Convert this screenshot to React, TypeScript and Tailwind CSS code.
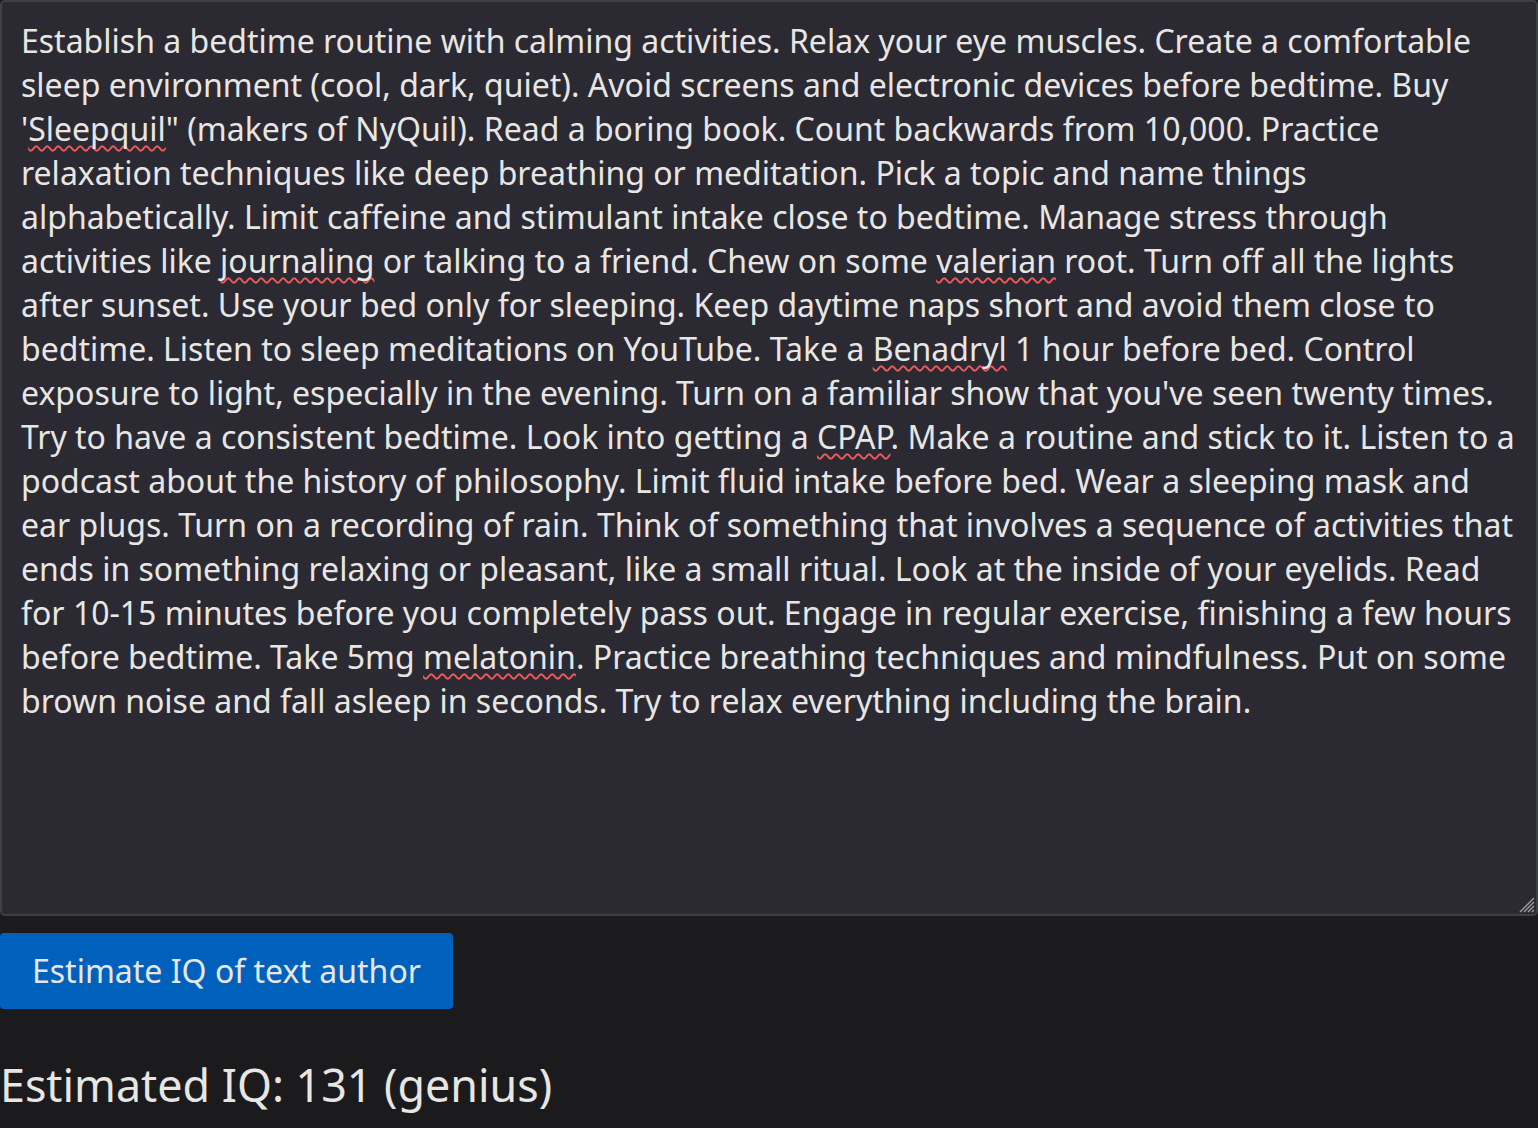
import React from "react";

const Miss = ({ children }: { children: React.ReactNode }) => (
  <span className="underline decoration-wavy decoration-[#f05a5a] decoration-2 underline-offset-[4px] [text-decoration-skip-ink:none]">
    {children}
  </span>
);

export default function App() {
  return (
    <div className="min-h-[1128px] w-full bg-[#1b1b1e] text-[#e8e6e3] font-['Noto_Sans',sans-serif]">
      {/* Fake textarea so the spelling squiggles can be shown */}
      <div className="relative h-[916px] w-full rounded-[5px] border-2 border-[#3c4144] bg-[#2b2a33] pl-[19px] pr-5 pt-[17px] text-[32px] leading-[44px]">
        <p>
          Establish a bedtime routine with calming activities. Relax your eye muscles. Create a comfortable sleep
          environment (cool, dark, quiet). Avoid screens and electronic devices before bedtime. Buy '<Miss>Sleepquil</Miss>"
          (makers of NyQuil). Read a boring book. Count backwards from 10,000. Practice relaxation techniques like deep
          breathing or meditation. Pick a topic and name things alphabetically. Limit caffeine and stimulant intake close to
          bedtime. Manage stress through activities like <Miss>journaling</Miss> or talking to a friend. Chew on some{" "}
          <Miss>valerian</Miss> root. Turn off all the lights after sunset. Use your bed only for sleeping. Keep daytime naps
          short and avoid them close to bedtime. Listen to sleep meditations on YouTube. Take a <Miss>Benadryl</Miss> 1 hour
          before bed. Control exposure to light, especially in the evening. Turn on a familiar show that you've seen twenty
          times. Try to have a consistent bedtime. Look into getting a <Miss>CPAP</Miss>. Make a routine and stick to it.
          Listen to a podcast about the history of philosophy. Limit fluid intake before bed. Wear a sleeping mask and ear
          plugs. Turn on a recording of rain. Think of something that involves a sequence of activities that ends in
          something relaxing or pleasant, like a small ritual. Look at the inside of your eyelids. Read for 10-15 minutes
          before you completely pass out. Engage in regular exercise, finishing a few hours before bedtime. Take 5mg{" "}
          <Miss>melatonin</Miss>. Practice breathing techniques and mindfulness. Put on some brown noise and fall asleep in
          seconds. Try to relax everything including the brain.
        </p>
        {/* resize grip */}
        <svg className="absolute bottom-[1px] right-[1px]" width="18" height="18" viewBox="0 0 18 18">
          <g stroke="#9a9aa0" strokeWidth="1.5">
            <line x1="17" y1="3" x2="3" y2="17" />
            <line x1="17" y1="7" x2="7" y2="17" />
            <line x1="17" y1="11" x2="11" y2="17" />
            <line x1="17" y1="15" x2="15" y2="17" />
          </g>
        </svg>
      </div>

      <button className="mt-[17px] h-[76px] rounded-[4px] bg-[#0061bd] px-[32px] text-[32px] leading-[44px] text-[#e8e6e3]">
        Estimate IQ of text author
      </button>

      <h2 className="mt-[44px] text-[44.8px] leading-[64px] font-normal">Estimated IQ: 131 (genius)</h2>
    </div>
  );
}
